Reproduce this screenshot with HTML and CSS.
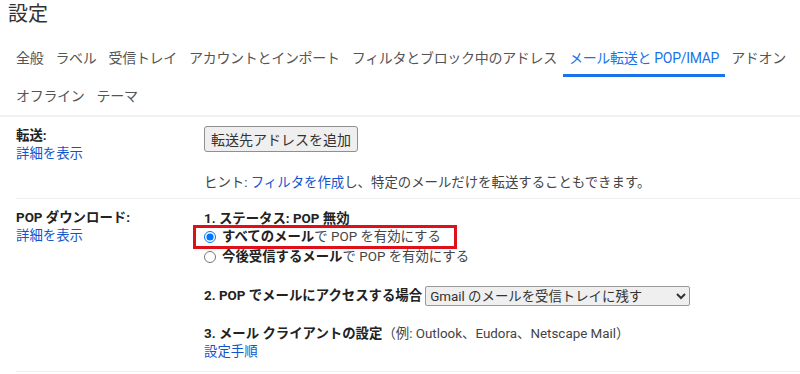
FILE: index.html
```html
<!DOCTYPE html>
<html lang="ja">
    <head>
        <meta charset="utf-8" />
        <title>設定</title>
        <link rel="stylesheet" href="styles.css">
    </head>
    <body>
        <h1 class="title">設定</h1>
        <nav class="tabs">
            <div class="tab-row">
                <a class="tab">全般</a>
                <a class="tab">ラベル</a>
                <a class="tab">受信トレイ</a>
                <a class="tab">アカウントとインポート</a>
                <a class="tab">フィルタとブロック中のアドレス</a>
                <a class="tab active">メール転送と POP/IMAP</a>
                <a class="tab">アドオン</a>
            </div>
            <div class="tab-row">
                <a class="tab">オフライン</a>
                <a class="tab">テーマ</a>
            </div>
        </nav>

        <section class="setting fwd">
            <div class="label">
                <b>転送:</b>
                <a class="link">詳細を表示</a>
            </div>
            <div class="content">
                <button class="btn">転送先アドレスを追加</button>
                <p class="hint">ヒント: <a class="link">フィルタを作成</a>し、特定のメールだけを転送することもできます。</p>
            </div>
        </section>

        <section class="setting pop">
            <div class="label">
                <b>POP ダウンロード:</b>
                <a class="link">詳細を表示</a>
            </div>
            <div class="content">
                <p class="status"><b>1. ステータス: POP 無効</b></p>
                <div class="mark">
                    <label class="radio"><input type="radio" name="pop" checked><b>すべてのメール</b>で POP を有効にする</label>
                </div>
                <label class="radio second"><input type="radio" name="pop"><b>今後受信するメール</b>で POP を有効にする</label>
                <div class="access">
                    <b>2. POP でメールにアクセスする場合</b>
                    <select class="pick">
                        <option>Gmail のメールを受信トレイに残す</option>
                    </select>
                </div>
                <p class="client"><b>3. メール クライアントの設定</b>（例: Outlook、Eudora、Netscape Mail）</p>
                <a class="link">設定手順</a>
            </div>
        </section>
    </body>
</html>
```

FILE: styles.css
```css
*{ margin:0; padding:0; box-sizing:border-box; }
body{ font-family: Roboto, "Noto Sans CJK JP", sans-serif;
    font-size: 13.4px;
    color: #444;
    background: #fff; }
b{ color: #222; font-weight: 700; }

.title{ font-size: 20px;
    font-weight: 400;
    line-height: 28px;
    color: #333;
    padding-left: 8px; }

.tabs{ margin-top: 12px;
    padding-left: 10px;
    border-bottom: 2px solid #f1f1f1; }
.tab-row{ display: flex; white-space: nowrap; }
.tab{ font-size: 14px;
    line-height: 20px;
    letter-spacing: -0.3px;
    padding: 8px 6px 6px;
    border-bottom: 3px solid transparent;
    color: #555; }
.tab-row + .tab-row .tab{ padding-top: 9px; }
.tab.active{ color: #1a73e8; border-bottom-color: #1a73e8; }

.link{ color: #15c; display: block; }
.hint .link{ display: inline; }

.setting{ display: flex;
    margin-left: 16px;
    line-height: 18px;
    border-bottom: 1px solid #eee; }
.label{ width: 188px; flex: none; }
.label b{ display: block; }
.content{ flex: 1; }

.fwd{ padding: 9px 0 6px; }
.fwd .label{ padding-top: 1px; }
.btn{ font-family: inherit;
    font-size: 14px;
    height: 26px;
    padding: 0 6px;
    color: #333;
    background: #efefef;
    border: 1px solid #8f8f8f;
    border-radius: 3px; }
.hint{ margin-top: 22px; }

.pop{ padding: 10px 0 10px; }
.status{ line-height: 16px; padding-top: 2px; }
.mark{ display: inline-block;
    margin: -2px 0 0 -11px;
    padding: 0 13px 0 8px;
    border: 3px solid #e0101a; }
.radio{ display: flex; align-items: center; }
.radio input{ width: 12px; height: 12px; margin: 0 6px 0 0; }
.second{ margin-top: -1px; }
.access{ margin-top: 20px;
    display: flex;
    align-items: center;
    gap: 3px; }
.pick{ font-family: inherit;
    font-size: 13.4px;
    width: 265px;
    height: 20px;
    color: #333;
    border: 1px solid #999;
    border-radius: 2px; }
.client{ margin-top: 19px; }
```
